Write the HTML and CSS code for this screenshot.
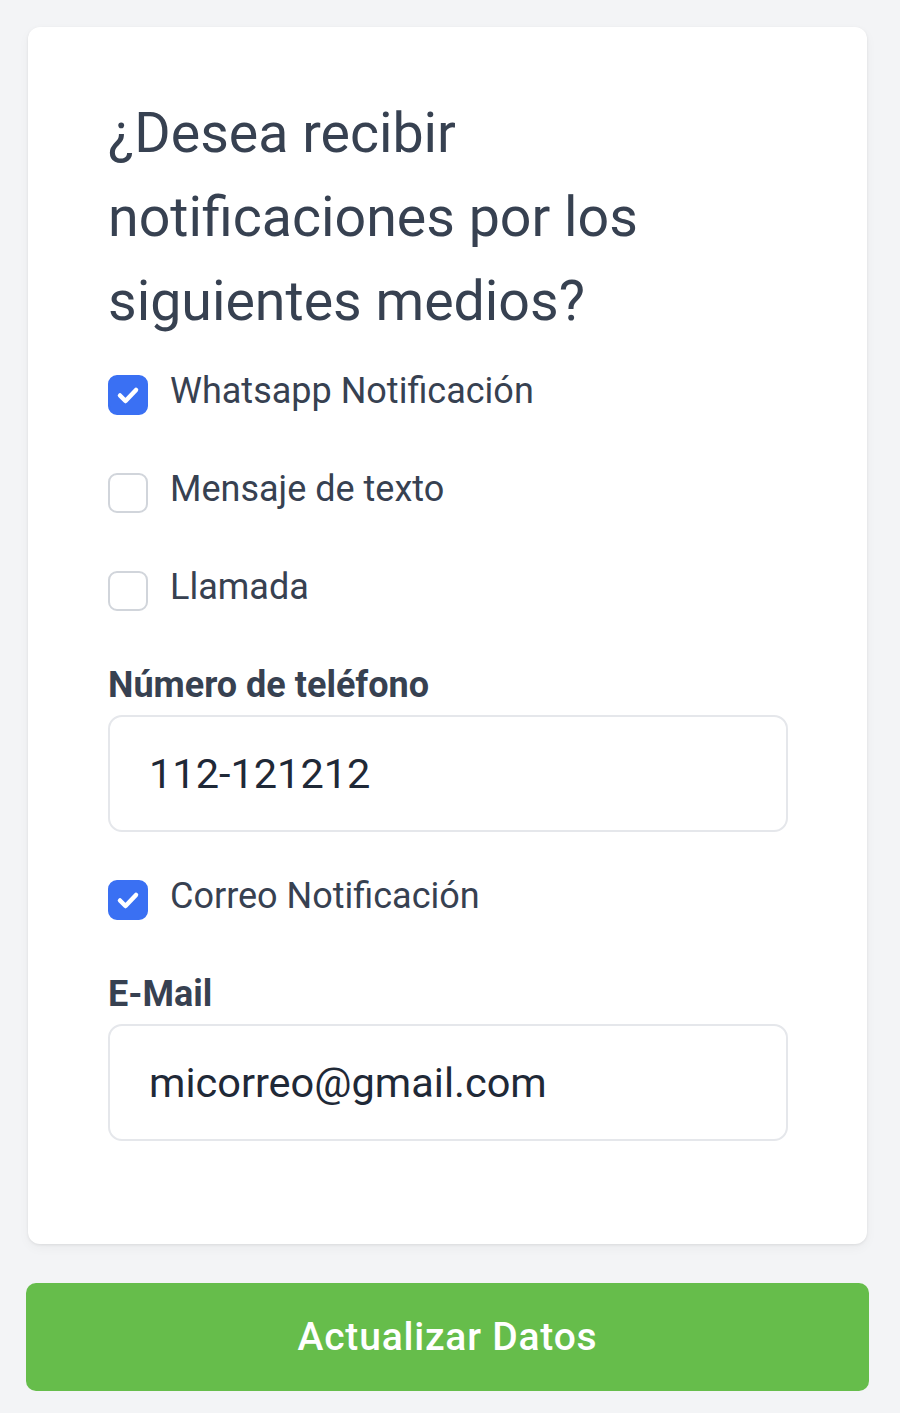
FILE: index.html
```html
<!DOCTYPE html>
<html lang="es">
<head>
<meta charset="utf-8">
<title>Notificaciones</title>
<link rel="stylesheet" href="styles.css">
</head>
<body>
<main class="page">
  <section class="card">
    <h1 class="title">¿Desea recibir notificaciones por los siguientes medios?</h1>
    <div class="options">
      <label class="check-row">
        <span class="box checked"><svg viewBox="0 0 40 40" width="40" height="40"><path d="M12 20.5 L17.5 26 L28 15" fill="none" stroke="#fff" stroke-width="4.5" stroke-linecap="round" stroke-linejoin="round"/></svg></span>
        <span class="check-text">Whatsapp Notificación</span>
      </label>
      <label class="check-row">
        <span class="box"></span>
        <span class="check-text">Mensaje de texto</span>
      </label>
      <label class="check-row">
        <span class="box"></span>
        <span class="check-text">Llamada</span>
      </label>
    </div>
    <div class="field">
      <div class="field-label">Número de teléfono</div>
      <div class="input">112-121212</div>
    </div>
    <label class="check-row single">
      <span class="box checked"><svg viewBox="0 0 40 40" width="40" height="40"><path d="M12 20.5 L17.5 26 L28 15" fill="none" stroke="#fff" stroke-width="4.5" stroke-linecap="round" stroke-linejoin="round"/></svg></span>
      <span class="check-text">Correo Notificación</span>
    </label>
    <div class="field">
      <div class="field-label">E-Mail</div>
      <div class="input">micorreo@gmail.com</div>
    </div>
  </section>
  <button class="submit" type="button">Actualizar Datos</button>
</main>
</body>
</html>
```

FILE: styles.css
```css
html, body {
  margin: 0;
  padding: 0;
}
body {
  background: #f3f4f6;
  font-family: Roboto, "Noto Sans", Arial, sans-serif;
  color: #374151;
}
.page {
  padding: 27px 33px 0 28px;
  display: flex;
  flex-direction: column;
}
.card {
  background: #ffffff;
  border-radius: 12px;
  box-shadow: 0 1px 3px rgba(0, 0, 0, 0.08), 0 4px 12px rgba(0, 0, 0, 0.04);
  padding: 65px 79px 103px 80px;
  display: flex;
  flex-direction: column;
}
.title {
  margin: 0;
  font-size: 55.5px;
  line-height: 84px;
  font-weight: 400;
  color: #374151;
}
.options {
  margin-top: 31px;
  display: flex;
  flex-direction: column;
  gap: 58px;
}
.check-row {
  display: flex;
  align-items: center;
  gap: 22px;
  height: 40px;
}
.check-row.single {
  margin-top: 48px;
}
.box {
  width: 40px;
  height: 40px;
  box-sizing: border-box;
  border: 2px solid #d1d5db;
  border-radius: 9px;
  background: #fff;
  flex: none;
  display: flex;
}
.box.checked {
  background: #3a70f3;
  border-color: #3a70f3;
}
.box svg {
  margin: -2px;
}
.check-text {
  font-size: 36px;
  line-height: 40px;
  margin-top: -8px;
  color: #374151;
}
.field {
  margin-top: 54px;
  display: flex;
  flex-direction: column;
  gap: 10px;
}
.field-label {
  font-size: 36px;
  line-height: 40px;
  font-weight: 700;
  color: #374151;
}
.input {
  height: 117px;
  box-sizing: border-box;
  border: 2px solid #e5e7eb;
  border-radius: 14px;
  padding: 0 39px;
  display: flex;
  align-items: center;
  font-size: 41.5px;
  color: #1f2937;
}
.submit {
  margin: 39px -2px 0 -2px;
  height: 108px;
  border: none;
  border-radius: 10px;
  background: #66bd4b;
  color: #ffffff;
  font-family: Roboto, "Noto Sans", Arial, sans-serif;
  font-size: 39px;
  letter-spacing: 0.8px;
  font-weight: 500;
}
```
